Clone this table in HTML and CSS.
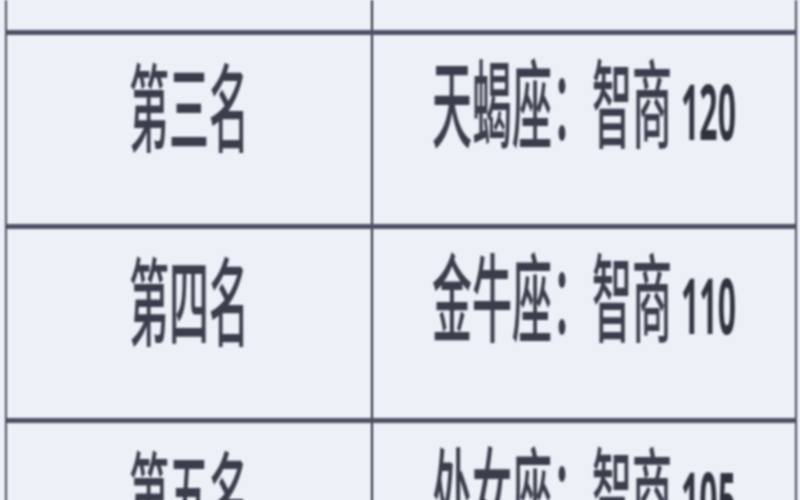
FILE: index.html
```html
<!DOCTYPE html>
<html lang="zh-CN">
<head>
<meta charset="utf-8">
<title>星座智商排名</title>
<link rel="stylesheet" href="styles.css">
</head>
<body>
<div class="table">
  <div class="row row-partial">
    <div class="cell"></div>
    <div class="cell"></div>
  </div>
  <div class="row">
    <div class="cell"><span class="t">第三名</span></div>
    <div class="cell"><span class="t">天蝎座：智商 <span class="num">120</span></span></div>
  </div>
  <div class="row">
    <div class="cell"><span class="t">第四名</span></div>
    <div class="cell"><span class="t">金牛座：智商 <span class="num">110</span></span></div>
  </div>
  <div class="row">
    <div class="cell"><span class="t">第五名</span></div>
    <div class="cell"><span class="t">处女座：智商 <span class="num">105</span></span></div>
  </div>
</div>
</body>
</html>
```
FILE: styles.css
```css
html, body {
  margin: 0;
  padding: 0;
  height: 100%;
  overflow: hidden;
  background: #eef0f8;
}

.table {
  margin-left: 5px;
  width: 788px;
  border-left: 2px solid #4a4d5c;
  border-right: 2px solid #4a4d5c;
  filter: blur(0.8px);
}

.row {
  display: grid;
  grid-template-columns: 366px 1fr;
  height: 189px;
  border-bottom: 5px solid #4c5064;
}

.row-partial {
  height: 30px;
}

.cell {
  display: flex;
  justify-content: center;
  align-items: flex-start;
  padding-top: 48px;
  box-sizing: border-box;
}

.cell:first-child {
  border-right: 2px solid #2a2d3a;
}

.row-partial .cell {
  padding-top: 0;
}

.t {
  display: inline-block;
  font-family: "Noto Sans CJK SC", "Noto Sans", sans-serif;
  font-weight: 500;
  font-size: 40px;
  line-height: 40px;
  color: #3a3d4b;
  white-space: nowrap;
  transform: scaleY(2.4);
  transform-origin: center;
}

.num {
  font-family: "Open Sans", "Noto Sans", sans-serif;
  font-weight: 700;
  font-size: 32px;
  color: #30333f;
}
```
